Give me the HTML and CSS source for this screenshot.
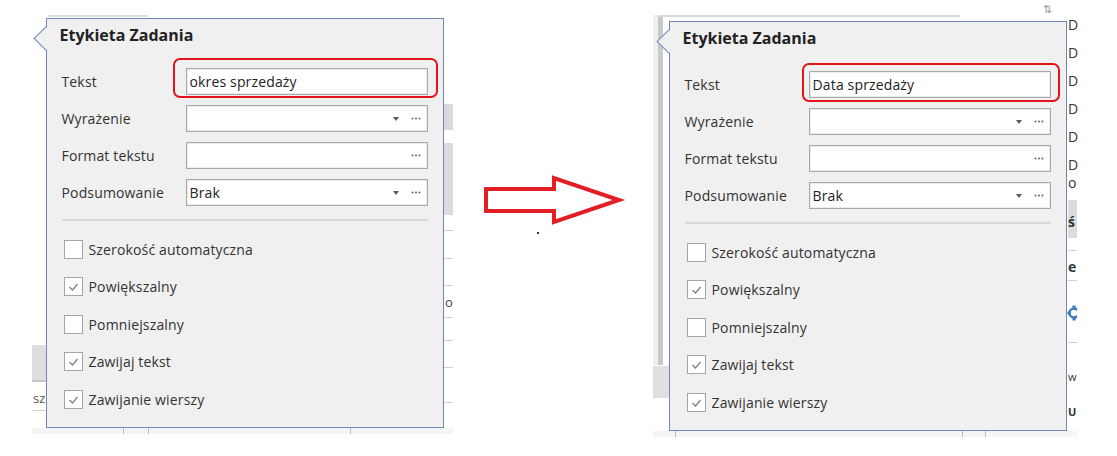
FILE: index.html
```html
<!DOCTYPE html>
<html lang="pl">
<head>
    <meta charset="UTF-8">
    <title>Etykieta Zadania - przed i po</title>
    <link rel="stylesheet" href="styles.css">
</head>
<body>

<div class="page">

    <!-- Zrzut 1: przed zmianą -->
    <div class="shot shot-before">
        <div class="frag b-top"></div>
        <div class="frag b-rblock1"></div>
        <div class="frag b-rblock2"></div>
        <div class="frag b-rline b-rl1"></div>
        <div class="frag b-rline b-rl2"></div>
        <div class="frag b-rline b-rl3"></div>
        <div class="frag b-rline b-rl4"></div>
        <div class="frag b-rline b-rl5"></div>
        <div class="frag b-rline b-rl6"></div>
        <div class="frag b-rline b-rl7"></div>
        <div class="frag b-o">o</div>
        <div class="frag b-lblock"></div>
        <div class="frag b-sz">sz</div>
        <div class="frag b-lline"></div>
        <div class="frag b-bottom"></div>
        <div class="frag tick b-t1"></div>
        <div class="frag tick b-t2"></div>
        <div class="frag tick b-t3"></div>

        <div class="popup">
            <div class="popup-title">Etykieta Zadania</div>
            <div class="fields">
                <div class="field">
                    <span class="field-label">Tekst</span>
                    <div class="box">
                        <span class="value">okres sprzedaży</span>
                        <span class="mark"></span>
                    </div>
                </div>
                <div class="field">
                    <span class="field-label">Wyrażenie</span>
                    <div class="box">
                        <span class="value"></span>
                        <span class="caret"></span>
                        <svg class="dots" viewBox="0 0 10 3"><circle cx="1.5" cy="1.5" r="1"/><circle cx="5" cy="1.5" r="1"/><circle cx="8.5" cy="1.5" r="1"/></svg>
                    </div>
                </div>
                <div class="field">
                    <span class="field-label">Format tekstu</span>
                    <div class="box">
                        <span class="value"></span>
                        <svg class="dots" viewBox="0 0 10 3"><circle cx="1.5" cy="1.5" r="1"/><circle cx="5" cy="1.5" r="1"/><circle cx="8.5" cy="1.5" r="1"/></svg>
                    </div>
                </div>
                <div class="field">
                    <span class="field-label">Podsumowanie</span>
                    <div class="box">
                        <span class="value">Brak</span>
                        <span class="caret"></span>
                        <svg class="dots" viewBox="0 0 10 3"><circle cx="1.5" cy="1.5" r="1"/><circle cx="5" cy="1.5" r="1"/><circle cx="8.5" cy="1.5" r="1"/></svg>
                    </div>
                </div>
            </div>
            <div class="sep"></div>
            <div class="checks">
                <div class="check"><span class="cb"></span>Szerokość automatyczna</div>
                <div class="check"><span class="cb"><svg viewBox="0 0 17 17"><polyline points="4.5,9 7.5,12 12.5,6"/></svg></span>Powiększalny</div>
                <div class="check"><span class="cb"></span>Pomniejszalny</div>
                <div class="check"><span class="cb"><svg viewBox="0 0 17 17"><polyline points="4.5,9 7.5,12 12.5,6"/></svg></span>Zawijaj tekst</div>
                <div class="check"><span class="cb"><svg viewBox="0 0 17 17"><polyline points="4.5,9 7.5,12 12.5,6"/></svg></span>Zawijanie wierszy</div>
            </div>
        </div>
    </div>

    <!-- Strzałka -->
    <div class="arrow-wrap">
        <svg class="arrow" viewBox="0 0 145 58">
            <polygon points="4,17 72,17 72,6 137,28 72,50 72,39 4,39"/>
        </svg>
        <div class="speck"></div>
    </div>

    <!-- Zrzut 2: po zmianie -->
    <div class="shot shot-after">
        <div class="frag a-lstrip"></div>
        <div class="frag a-lbar"></div>
        <div class="frag a-lblock"></div>
        <div class="frag a-top"></div>
        <div class="frag a-sort">⇅</div>
        <div class="frag a-dcol">
            <div>D</div><div>D</div><div>D</div><div>D</div><div>D</div><div>D</div>
        </div>
        <div class="frag a-txt a-or">o</div>
        <div class="frag a-block"><span>ś</span></div>
        <div class="frag a-line a-l1"></div>
        <div class="frag a-txt a-e">e</div>
        <div class="frag a-line a-l2"></div>
        <svg class="frag a-gear" viewBox="0 0 10 18">
            <circle cx="7" cy="9" r="4.5"/>
            <rect x="5.5" y="1.5" width="3" height="3"/>
            <rect x="5.5" y="13.5" width="3" height="3"/>
            <rect x="0.5" y="7.5" width="3" height="3"/>
        </svg>
        <div class="frag a-line a-l3"></div>
        <div class="frag a-txt a-wi">w</div>
        <div class="frag a-txt a-uf">U</div>
        <div class="frag a-bottom"></div>
        <div class="frag tick a-t1"></div>
        <div class="frag tick a-t2"></div>
        <div class="frag tick a-t3"></div>

        <div class="popup">
            <div class="popup-title">Etykieta Zadania</div>
            <div class="fields">
                <div class="field">
                    <span class="field-label">Tekst</span>
                    <div class="box">
                        <span class="value">Data sprzedaży</span>
                        <span class="mark"></span>
                    </div>
                </div>
                <div class="field">
                    <span class="field-label">Wyrażenie</span>
                    <div class="box">
                        <span class="value"></span>
                        <span class="caret"></span>
                        <svg class="dots" viewBox="0 0 10 3"><circle cx="1.5" cy="1.5" r="1"/><circle cx="5" cy="1.5" r="1"/><circle cx="8.5" cy="1.5" r="1"/></svg>
                    </div>
                </div>
                <div class="field">
                    <span class="field-label">Format tekstu</span>
                    <div class="box">
                        <span class="value"></span>
                        <svg class="dots" viewBox="0 0 10 3"><circle cx="1.5" cy="1.5" r="1"/><circle cx="5" cy="1.5" r="1"/><circle cx="8.5" cy="1.5" r="1"/></svg>
                    </div>
                </div>
                <div class="field">
                    <span class="field-label">Podsumowanie</span>
                    <div class="box">
                        <span class="value">Brak</span>
                        <span class="caret"></span>
                        <svg class="dots" viewBox="0 0 10 3"><circle cx="1.5" cy="1.5" r="1"/><circle cx="5" cy="1.5" r="1"/><circle cx="8.5" cy="1.5" r="1"/></svg>
                    </div>
                </div>
            </div>
            <div class="sep"></div>
            <div class="checks">
                <div class="check"><span class="cb"></span>Szerokość automatyczna</div>
                <div class="check"><span class="cb"><svg viewBox="0 0 17 17"><polyline points="4.5,9 7.5,12 12.5,6"/></svg></span>Powiększalny</div>
                <div class="check"><span class="cb"></span>Pomniejszalny</div>
                <div class="check"><span class="cb"><svg viewBox="0 0 17 17"><polyline points="4.5,9 7.5,12 12.5,6"/></svg></span>Zawijaj tekst</div>
                <div class="check"><span class="cb"><svg viewBox="0 0 17 17"><polyline points="4.5,9 7.5,12 12.5,6"/></svg></span>Zawijanie wierszy</div>
            </div>
        </div>
    </div>

</div>

</body>
</html>
```

FILE: styles.css
```css
body {
    margin: 0;
    background-color: #fff;
    font-family: "Open Sans", "Noto Sans", Arial, sans-serif;
}
.page {
    display: flex;
    align-items: flex-start;
    padding: 15px 0 0 32px;
}

/* zrzuty ekranu */
.shot {
    position: relative;
    box-sizing: border-box;
    flex: none;
    background-color: #fff;
}
.shot-before {
    width: 421px;
    height: 419px;
    padding: 3px 0 0 14px;
}
.shot-after {
    width: 424px;
    height: 422px;
    padding: 6px 0 0 16px;
}
.frag {
    position: absolute;
}
.tick {
    width: 1px;
    height: 6px;
    background-color: #bdbdbd;
}

/* tło pierwszego zrzutu */
.b-top { left: 16px; top: 0; width: 100px; height: 2px; background-color: #dedede; }
.b-rblock1 { left: 412px; top: 89px; width: 9px; height: 26px; background-color: #d9d9d9; }
.b-rblock2 { left: 412px; top: 128px; width: 9px; height: 72px; background-color: #dcdcdc; }
.b-rline { left: 412px; width: 9px; height: 1px; background-color: #cfcfcf; }
.b-rl1 { top: 215px; }
.b-rl2 { top: 243px; }
.b-rl3 { top: 270px; }
.b-rl4 { top: 302px; }
.b-rl5 { top: 325px; }
.b-rl6 { top: 352px; }
.b-rl7 { top: 387px; }
.b-o { left: 413px; top: 278px; font-size: 13px; line-height: 18px; color: #444; }
.b-lblock { left: 0; top: 330px; width: 14px; height: 35px; background-color: #dedede; border-bottom: 2px solid #c6c6c6; }
.b-sz { left: 1px; top: 374px; font-size: 13px; line-height: 18px; color: #555; }
.b-lline { left: 0; top: 395px; width: 14px; height: 1px; background-color: #d4d4d4; }
.b-bottom { left: 0; top: 413px; width: 421px; height: 6px; background-color: #f5f5f5; }
.b-t1 { left: 91px; top: 413px; }
.b-t2 { left: 116px; top: 413px; }
.b-t3 { left: 318px; top: 413px; }

/* tło drugiego zrzutu */
.a-lstrip { left: 0; top: 0; width: 5px; height: 350px; background-color: #eeeeee; }
.a-lbar { left: 5px; top: 0; width: 5px; height: 350px; background-color: #c9c9c9; }
.a-lblock { left: 0; top: 351px; width: 16px; height: 32px; background-color: #e0e0e0; }
.a-top { left: 5px; top: 0; width: 302px; height: 2px; background-color: #dadada; }
.a-sort { left: 390px; top: -13px; font-size: 11px; line-height: 14px; color: #9a9a9a; }
.a-dcol { left: 415px; top: -4px; width: 9px; font-size: 14px; line-height: 28px; color: #333; }
.a-txt { left: 415px; font-size: 14px; line-height: 18px; color: #333; }
.a-or { top: 159px; }
.a-e { top: 243px; font-weight: 700; }
.a-wi { top: 353px; font-size: 11px; }
.a-uf { top: 388px; font-size: 11px; font-weight: 700; }
.a-block {
    left: 415px;
    top: 185px;
    width: 9px;
    height: 38px;
    background-color: #dcdcdc;
    font-size: 14px;
    font-weight: 700;
    line-height: 44px;
    color: #333;
}
.a-line { left: 415px; width: 9px; height: 1px; background-color: #cfcfcf; }
.a-l1 { top: 235px; }
.a-l2 { top: 265px; }
.a-l3 { top: 327px; }
.a-gear { left: 414px; top: 289px; width: 10px; height: 18px; fill: none; }
.a-gear circle { stroke: #3b78c6; stroke-width: 2.5; }
.a-gear rect { fill: #3b78c6; }
.a-bottom { left: 0; top: 416px; width: 424px; height: 6px; background-color: #f5f5f5; }
.a-t1 { left: 22px; top: 416px; }
.a-t2 { left: 309px; top: 416px; }
.a-t3 { left: 332px; top: 416px; }

/* okno podręczne */
.popup {
    position: relative;
    z-index: 1;
    width: 398px;
    height: 410px;
    box-sizing: border-box;
    background-color: #f0f0f0;
    border: 1.5px solid #6e88b8;
    padding: 6px 15.5px 0 14.5px;
    color: #333;
    font-size: 14px;
    letter-spacing: 0.15px;
}
.popup::before {
    content: "";
    position: absolute;
    left: -10px;
    top: 11px;
    width: 17px;
    height: 17px;
    box-sizing: border-box;
    background-color: #f0f0f0;
    border-left: 1.5px solid #6e88b8;
    border-bottom: 1.5px solid #6e88b8;
    transform: rotate(45deg);
}
.popup-title {
    margin-left: -2px;
    font-size: 16px;
    font-weight: 700;
    line-height: 20px;
    letter-spacing: 0;
    color: #222;
}
.fields {
    display: flex;
    flex-direction: column;
    gap: 10px;
    margin-top: 22.5px;
}
.field {
    display: flex;
    align-items: center;
    height: 27px;
}
.field-label {
    width: 124px;
    flex: none;
}
.box {
    position: relative;
    flex: 1;
    height: 27px;
    box-sizing: border-box;
    display: flex;
    align-items: center;
    padding: 0 6px 0 3px;
    background-color: #fff;
    border: 1px solid #a9a9a9;
    box-shadow: inset 0 0 0 1px #ececec;
}
.value {
    flex: 1;
    color: #222;
}
.caret {
    width: 0;
    height: 0;
    margin: 2px 12px 0 0;
    border-left: 3.5px solid transparent;
    border-right: 3.5px solid transparent;
    border-top: 4px solid #5a5a5a;
}
.dots {
    width: 10px;
    height: 3px;
    fill: #666;
}

/* czerwone zaznaczenie */
.mark {
    position: absolute;
    border: 2px solid #e3141b;
    border-radius: 7px;
}
.shot-before .mark {
    left: -14px;
    right: -11px;
    top: -11px;
    bottom: -4px;
}
.shot-after .mark {
    left: -8px;
    right: -10px;
    top: -9px;
    bottom: -5px;
}

.sep {
    height: 2px;
    margin-top: 13px;
    background-color: #d9d9d9;
}
.checks {
    display: flex;
    flex-direction: column;
    gap: 18.5px;
    margin-top: 19px;
    padding-left: 2px;
}
.check {
    display: flex;
    align-items: center;
    gap: 6px;
    height: 19px;
}
.cb {
    width: 19px;
    height: 19px;
    flex: none;
    box-sizing: border-box;
    background-color: #fff;
    border: 1px solid #a5a5a5;
}
.cb svg {
    display: block;
    width: 17px;
    height: 17px;
    fill: none;
    stroke: #7d7d7d;
    stroke-width: 1.2;
}

/* strzałka */
.arrow-wrap {
    width: 200px;
    flex: none;
}
.arrow {
    display: block;
    width: 145px;
    height: 58px;
    margin: 157px 0 0 29px;
}
.arrow polygon {
    fill: #fff;
    stroke: #e41e26;
    stroke-width: 4;
    stroke-linejoin: miter;
    stroke-miterlimit: 10;
}
.speck {
    width: 2px;
    height: 2px;
    margin: 2px 0 0 84px;
    background-color: #333;
}
```
